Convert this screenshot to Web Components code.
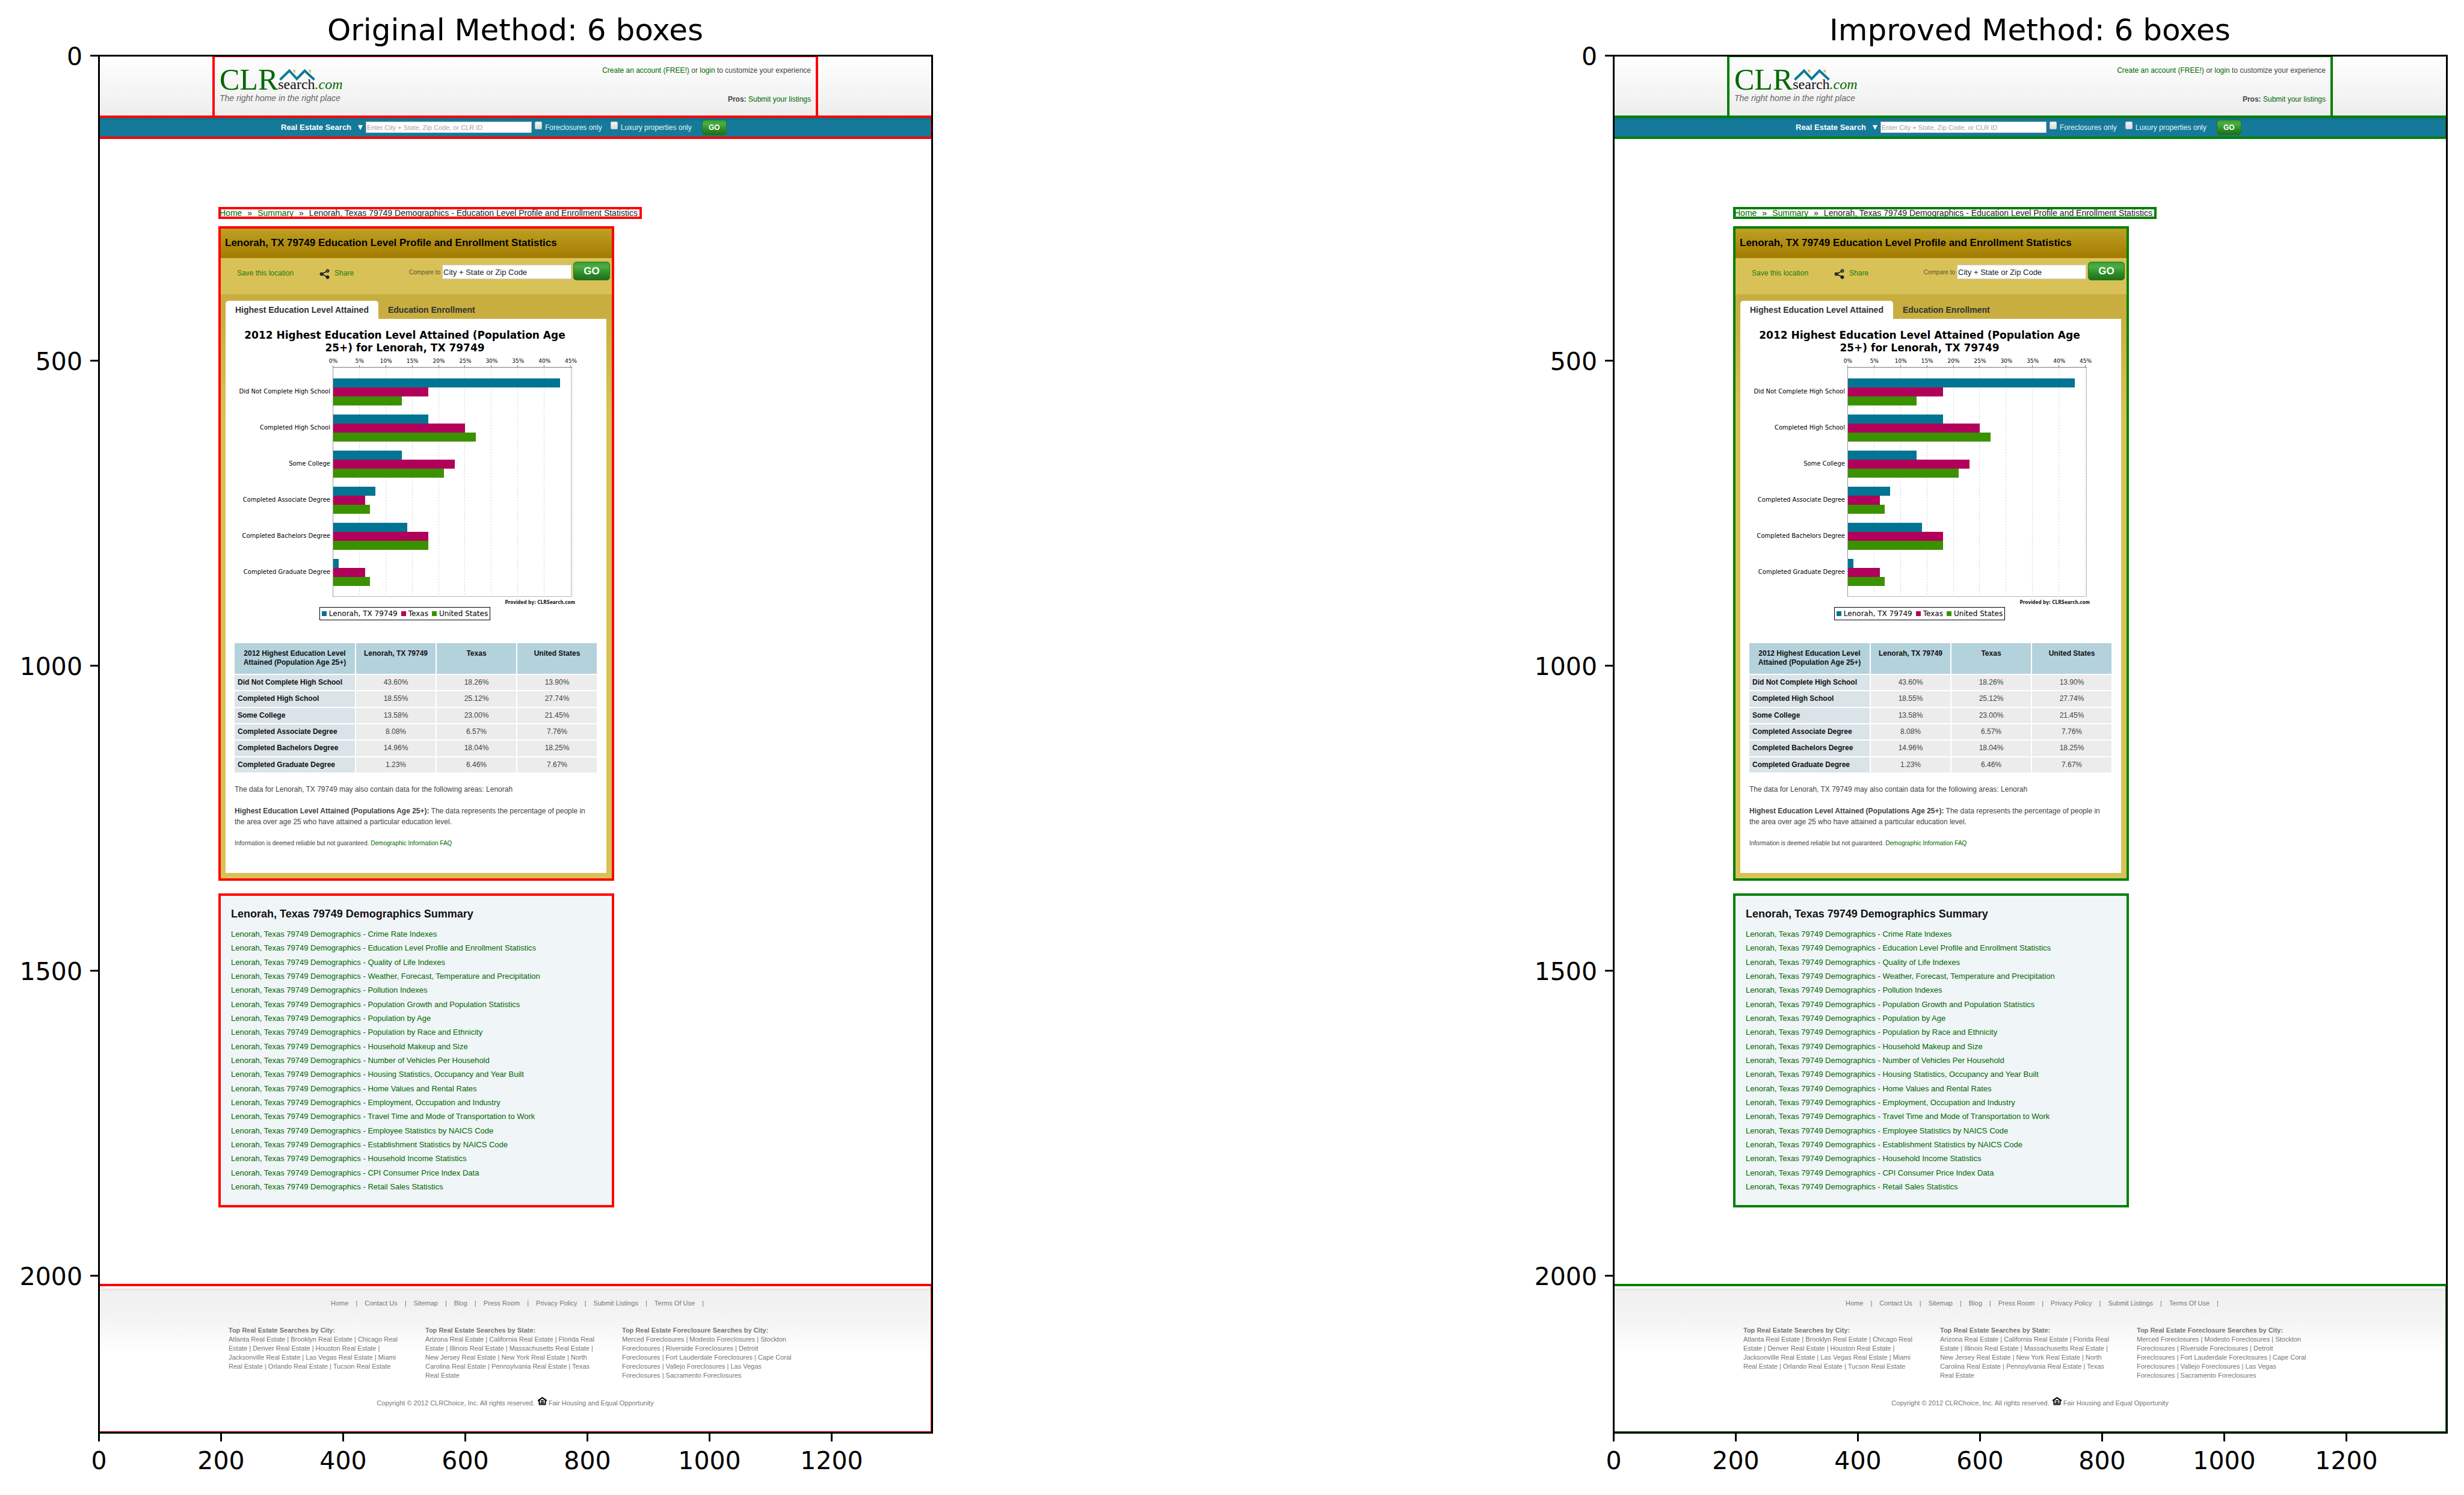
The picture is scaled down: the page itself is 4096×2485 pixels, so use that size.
<!DOCTYPE html>
<html lang="en">
<head>
<meta charset="utf-8">
<title>Box detection comparison</title>
<style>
body{margin:0;background:#fff;font-family:"Liberation Sans",Arial,sans-serif}
main{display:flex;gap:969px;padding-right:29px}
plot-figure{flex:1}
</style>
</head>
<body>
<main>
  <plot-figure heading="Original Method: 6 boxes" mark="#ff0000"><clr-page></clr-page></plot-figure>
  <plot-figure heading="Improved Method: 6 boxes" mark="#008000"><clr-page></clr-page></plot-figure>
</main>
<script>
const reset = `*{box-sizing:border-box}a{color:#006800;text-decoration:none}ul,ol,h1,h2,h3,p{margin:0;padding:0;list-style:none}
button,input{font-family:inherit;margin:0}
.go{color:#fff;font-weight:bold;padding:0;border:1px solid #23741f;border-radius:5px;background:linear-gradient(#3f9c38,#4aae42 25%,#2c8a26 65%,#216f1a)}`;

function define(name, render){
  customElements.define(name, class extends HTMLElement{
    connectedCallback(){
      if(this.shadowRoot) return;
      const root = this.attachShadow({mode:'open'});
      const t = document.createElement('template');
      t.innerHTML = render(this);
      root.append(t.content.cloneNode(true));
    }
  });
}

/* Axes with ticks around a slotted picture */
define('plot-figure', el => `<style>${reset}
:host{display:grid;grid-template-columns:164px 1fr;grid-template-rows:93px auto 100px;--mark:${el.getAttribute('mark')};min-width:0}
h1{grid-column:2;padding-top:20px;text-align:center;font:50px/60px "DejaVu Sans",sans-serif;white-space:nowrap}
ol{font:41px/48px "DejaVu Sans",sans-serif}
.y{grid-column:1;margin-top:-25px}
.y li{height:507px}
.y li:last-child{height:49px}
.y div{display:flex;justify-content:flex-end;align-items:center;gap:13px;height:49px}
.y div span{padding-top:3px}
.y i{width:15px;height:3px;margin-right:-1px;background:#000}
.stage{position:relative;min-width:0}
.clip{overflow:hidden}
.stage::after{content:"";position:absolute;inset:-2px -2px -2px -1px;border:3px solid #000;pointer-events:none}
.x{grid-column:2;display:flex;margin-left:-101px}
.x li{width:203px;display:flex;flex-direction:column;align-items:center;gap:8px}
.x i{width:3px;height:15px;background:#000}
</style>
<h1>${el.getAttribute('heading')}</h1>
<ol class="y">${[0,500,1000,1500,2000].map(v=>`<li><div><span>${v}</span><i></i></div></li>`).join('')}</ol>
<div class="stage"><div class="clip"><slot></slot></div></div>
<ol class="x">${[0,200,400,600,800,1000,1200].map(v=>`<li><i></i><span>${v}</span></li>`).join('')}</ol>`);

define('clr-page', () => `<style>${reset}
:host{display:block;background:#fff;color:#444}
.boxed{outline:4px solid var(--mark);outline-offset:-2px}
.body{width:983px;margin:0 auto;padding:117px 0 131px}
bread-crumb{margin-bottom:16px}
education-panel{margin-bottom:25px}
</style>
<site-header></site-header>
<search-bar class="boxed"></search-bar>
<div class="body">
<bread-crumb class="boxed"></bread-crumb>
<education-panel class="boxed"></education-panel>
<demographics-summary class="boxed"></demographics-summary>
</div>
<site-footer class="boxed"></site-footer>`);

define('site-header', () => `<style>${reset}
:host{display:block;background:linear-gradient(#fff,#ededed)}
.in{width:1003px;height:101px;margin:0 auto;padding:16px 10px 0;display:flex;justify-content:space-between;outline:4px solid var(--mark);outline-offset:-2px}
.logo{display:flex;height:46px;font-family:"Liberation Serif",serif;color:#006800}
.clr{font-size:50px;line-height:46px}
.sub{padding-top:6px}
.sub svg{display:block;margin-left:2px}
.sub div{font-size:24px;line-height:24px;margin-top:-6px}
.sub b{font-weight:normal;color:#111}
.tag{font:italic 14px/16px "Liberation Sans",sans-serif;color:#666}
.acct{display:flex;flex-direction:column;gap:32px;text-align:right;font-size:12px;line-height:16px}
</style>
<div class="in">
<div><div class="logo"><span class="clr">CLR</span><div class="sub">
<svg width="60" height="19" viewBox="0 0 60 19"><path d="M23 1h4v6l-4-4zM49 1h4v6l-4-4z" fill="#dcc050"/><path d="M1.500 17.500L17 2.500L29.500 16L42.500 2.500L58.500 17.500" fill="none" stroke="#0b7a99" stroke-width="4"/></svg>
<div><b>search</b><i>.com</i></div></div></div>
<p class="tag">The right home in the right place</p></div>
<div class="acct"><p><a href="#">Create an account (FREE!)</a> or <a href="#">login</a> to customize your experience</p>
<p><b>Pros:</b> <a href="#">Submit your listings</a></p></div>
</div>`);

define('search-bar', () => `<style>${reset}
:host{display:block;background:linear-gradient(#106a88,#157a99 8px)}
form{width:983px;height:35px;margin:0 auto;padding-left:102px;display:flex;align-items:center;color:#e6f2f6;font-size:12px;line-height:16px}
.menu{display:flex;align-items:center;justify-content:space-between;width:136px;margin-right:5px;color:#fff;font-size:13px;font-weight:bold}
input[type=text]{width:276px;height:19px;padding:0 1px;border:1px solid #bbb;background:#fff;font-size:11px}
input::placeholder{color:#a3a3a3;opacity:1}
label{display:flex;align-items:center;gap:5px;margin-left:5px}
label+label{margin-left:14px}
input[type=checkbox]{appearance:none;width:12px;height:13px;margin-bottom:6px;border:1px solid #c4c4c4;border-radius:2px;background:linear-gradient(#f4f4f4,#d9d9d9)}
.go{width:41px;height:26px;margin-left:17px;font-size:12px}
</style>
<form onsubmit="return false"><a class="menu" href="#">Real Estate Search<svg width="8" height="8" viewBox="0 0 8 8"><path d="M0 0H8L4 8z" fill="#fff"/></svg></a>
<input type="text" aria-label="Location" placeholder="Enter City + State, Zip Code, or CLR ID">
<label><input type="checkbox">Foreclosures only</label>
<label><input type="checkbox">Luxury properties only</label>
<button class="go">GO</button></form>`);

define('bread-crumb', () => `<style>${reset}
:host{display:flex;gap:9px;width:700px;height:16px;font-size:14px;line-height:16px;white-space:nowrap;color:#222}
</style><a href="#">Home</a><span>»</span><a href="#">Summary</a><span>»</span><span>Lenorah, Texas 79749 Demographics - Education Level Profile and Enrollment Statistics</span>`);

define('education-panel', () => `<style>${reset}
:host{display:block;width:654px;background:#d8c258}
h2{height:51px;padding-left:9px;font-size:17px;line-height:51px;color:#000;background:linear-gradient(#c0a224,#a27b00)}
.tools{height:60px;display:flex;align-items:flex-start;justify-content:space-between;padding:0 5px 0 29px;font-size:12px;line-height:16px}
.links{display:flex;gap:43px;padding-top:17px}
.links a{color:#1f7a0c}
.share{display:flex;gap:8px}
.share svg{margin-top:1px}
form{display:flex;align-items:center;gap:3px;padding-top:6px}
label{font-size:10px;padding-top:5px;color:#5c5433}
input{width:215px;height:24px;margin-top:3px;padding:0 1px;border:1px solid #ccc;font-size:13px;color:#222;background:#fff}
.go{width:61px;height:31px;font-size:17px}
.area{padding:11px 11px 11px 10px;background:linear-gradient(#c8ae40,#c8ae40 30px,#d8c258 200px)}
nav{display:flex;font-size:14px;line-height:30px;font-weight:bold}
nav a{color:#333;padding:0 16px;border-radius:5px 5px 0 0}
nav a.on{background:#fff}
.sheet{background:#fff;padding:17px 15px 40px}
level-table{margin:36px -2px 0}
.notes{width:596px;font-size:12px;line-height:18px;display:grid;gap:18px;padding-top:17px}
.small{font-size:10px}
</style>
<h2>Lenorah, TX 79749 Education Level Profile and Enrollment Statistics</h2>
<div class="tools"><div class="links"><a href="#">Save this location</a>
<a href="#" class="share"><svg width="17" height="17" viewBox="0 0 17 17"><path d="M13.500 3.500L3.500 8.500L13.500 13.500" fill="none" stroke="#222" stroke-width="1.800"/><g stroke="#111"><circle cx="13.500" cy="3.300" r="2.500" fill="#555"/><circle cx="3.500" cy="8.500" r="2.500" fill="#333"/><circle cx="13.500" cy="13.700" r="2.500" fill="#222"/></g></svg>Share</a></div>
<form onsubmit="return false"><label for="cmp">Compare to</label><input id="cmp" type="text" value="City + State or Zip Code"><button class="go">GO</button></form></div>
<div class="area"><nav><a href="#" class="on">Highest Education Level Attained</a><a href="#">Education Enrollment</a></nav>
<div class="sheet"><level-chart></level-chart><level-table></level-table>
<div class="notes"><p>The data for Lenorah, TX 79749 may also contain data for the following areas: Lenorah</p>
<p><b>Highest Education Level Attained (Populations Age 25+):</b> The data represents the percentage of people in the area over age 25 who have attained a particular education level.</p>
<p class="small">Information is deemed reliable but not guaranteed. <a href="#">Demographic Information FAQ</a></p></div>
</div></div>`);

const levels = [
 ['Did Not Complete High School','43.60%','18.26%','13.90%'],
 ['Completed High School','18.55%','25.12%','27.74%'],
 ['Some College','13.58%','23.00%','21.45%'],
 ['Completed Associate Degree','8.08%','6.57%','7.76%'],
 ['Completed Bachelors Degree','14.96%','18.04%','18.25%'],
 ['Completed Graduate Degree','1.23%','6.46%','7.67%']];
const areas = ['Lenorah, TX 79749','Texas','United States'];
const hues = ['#007493','#b1005a','#3b9200'];

define('level-chart', () => {
  const step = 395/9;
  let g = '';
  for(let i=1;i<10;i++){const x=Math.round(i*step)+.5; g+=`<path d="M${x} 1V382" stroke="#ddd" stroke-dasharray="3 2"/><path d="M${x} -3V0" stroke="#777"/>`;}
  levels.forEach((r,i)=>r.slice(1).forEach((v,j)=>{
    g+=`<rect x="1" y="${19+i*60+j*15}" width="${Math.round(Math.floor(parseFloat(v))*395/45)}" height="15" fill="${hues[j]}"/>`;}));
  return `<style>${reset}
:host{display:block;width:566px;font-family:"DejaVu Sans",sans-serif;color:#000}
h3{font-size:17px;line-height:21px;text-align:center}
.scale{display:flex;width:439px;margin:4px 0 3px 142px;font-size:9px;line-height:14px;text-align:center}
.scale li{flex:1}
.plot{display:flex;gap:4px}
.names{width:159px;padding:11px 0;text-align:right;font-size:10px;line-height:60px;white-space:nowrap}
svg{display:block;overflow:visible}
.by{margin-top:4px;text-align:right;font:bold 8px/12px "DejaVu Sans Condensed","DejaVu Sans",sans-serif;color:#222}
.key{display:flex;gap:6px;width:fit-content;height:22px;margin:1px auto 0;padding:0 3px;border:1px solid #000;font-size:12px;line-height:20px}
.key li{display:flex;align-items:center;gap:4px}
.key i{width:8px;height:8px}
</style>
<h3>2012 Highest Education Level Attained (Population Age 25+) for Lenorah, TX 79749</h3>
<ul class="scale">${[0,5,10,15,20,25,30,35,40,45].map(v=>`<li>${v}%</li>`).join('')}</ul>
<div class="plot"><ul class="names">${levels.map(r=>`<li>${r[0]}</li>`).join('')}</ul>
<svg width="398" height="382" viewBox="0 0 398 382"><path d="M397.500 .5V381.500H.5" fill="none" stroke="#b5b5b5"/>${g}<path d="M.5 382V-3" stroke="#999"/><path d="M0 .5H398" stroke="#777"/></svg></div>
<p class="by">Provided by: CLRSearch.com</p>
<ul class="key">${areas.map((a,i)=>`<li><i style="background:${hues[i]}"></i>${a}</li>`).join('')}</ul>`;
});

define('level-table', () => `<style>${reset}
:host{display:block}
table{width:606px;height:219px;border-spacing:2px;table-layout:fixed;font-size:12px;line-height:15px}
th,td{padding:0;text-align:center}
thead th{height:51px;background:#b4d2dc;color:#111;vertical-align:top;padding-top:10px}
th:first-child{width:200px}
tbody th{background:#dae3e8;color:#111;text-align:left;padding-left:5px}
td{background:#ececec}
</style>
<table><thead><tr><th scope="col">2012 Highest Education Level Attained (Population Age 25+)</th>${areas.map(a=>`<th scope="col">${a}</th>`).join('')}</tr></thead>
<tbody>${levels.map(r=>`<tr><th scope="row">${r[0]}</th>${r.slice(1).map(v=>`<td>${v}</td>`).join('')}</tr>`).join('')}</tbody></table>`);

define('demographics-summary', () => `<style>${reset}
:host{display:block;width:654px;padding:21px 19px 24px;background:#f0f5f8}
h2{font-size:18px;line-height:22px;color:#111;margin-bottom:15px}
ul{display:flex;flex-direction:column;justify-content:space-between;height:436px;font-size:13px;line-height:16px}
</style><h2>Lenorah, Texas 79749 Demographics Summary</h2><ul>${[
'Crime Rate Indexes','Education Level Profile and Enrollment Statistics','Quality of Life Indexes','Weather, Forecast, Temperature and Precipitation','Pollution Indexes','Population Growth and Population Statistics','Population by Age','Population by Race and Ethnicity','Household Makeup and Size','Number of Vehicles Per Household','Housing Statistics, Occupancy and Year Built','Home Values and Rental Rates','Employment, Occupation and Industry','Travel Time and Mode of Transportation to Work','Employee Statistics by NAICS Code','Establishment Statistics by NAICS Code','Household Income Statistics','CPI Consumer Price Index Data','Retail Sales Statistics'
].map(s=>`<li><a href="#">Lenorah, Texas 79749 Demographics - ${s}</a></li>`).join('')}</ul>`);

const list = s => s.split(',').map(x=>`<a href="#">${x.split(' ').map(w=>`<span>${w}</span>`).join(' ')}</a>`).join(' | ');
define('site-footer', () => `<style>${reset}
:host{display:block;padding-bottom:41px;color:#777;font-size:11px;background:linear-gradient(#fff 2px,#e2e2e2 9px,#f0f0f0 9px,#f3f3f3 50px,#fff 115px)}
a{color:inherit}
nav{display:flex;justify-content:center;gap:12px;padding:23px 0 30px 7px;line-height:14px}
.cols{display:grid;grid-template-columns:repeat(3,327px);width:983px;margin:0 auto;padding-left:15px;line-height:15px}
.cols div{padding-right:35px}
h3{font-size:11px;line-height:16px}
.copy{display:flex;justify-content:center;margin-top:30px;line-height:16px}
.copy svg{margin:-2px 3px 0 5px}
</style>
<nav>${['Home','Contact Us','Sitemap','Blog','Press Room','Privacy Policy','Submit Listings','Terms Of Use'].map(x=>`<a href="#">${x}</a><span>|</span>`).join('')}</nav>
<div class="cols">
<div><h3>Top Real Estate Searches by City:</h3><p>${list('Atlanta Real Estate,Brooklyn Real Estate,Chicago Real Estate,Denver Real Estate,Houston Real Estate,Jacksonville Real Estate,Las Vegas Real Estate,Miami Real Estate,Orlando Real Estate,Tucson Real Estate')}</p></div>
<div><h3>Top Real Estate Searches by State:</h3><p>${list('Arizona Real Estate,California Real Estate,Florida Real Estate,Illinois Real Estate,Massachusetts Real Estate,New Jersey Real Estate,New York Real Estate,North Carolina Real Estate,Pennsylvania Real Estate,Texas Real Estate')}</p></div>
<div><h3>Top Real Estate Foreclosure Searches by City:</h3><p>${list('Merced Foreclosures,Modesto Foreclosures,Stockton Foreclosures,Riverside Foreclosures,Detroit Foreclosures,Fort Lauderdale Foreclosures,Cape Coral Foreclosures,Vallejo Foreclosures,Las Vegas Foreclosures,Sacramento Foreclosures')}</p></div>
</div>
<div class="copy">Copyright © 2012 CLRChoice, Inc. All rights reserved.<svg width="15" height="15" viewBox="0 0 15 15"><path d="M7.500 0L15 5V7H13.500V13H1.500V7H0V5z" fill="#000"/><path d="M7.500 2.500L11.500 5.500V11H3.500V5.500z" fill="#fff"/><path d="M5 5.500H10V7.500H5zM5 8.500H10V10.500H5z" fill="#000"/><path d="M1.500 14.500H13.500" stroke="#777" stroke-dasharray="2 1"/></svg>Fair Housing and Equal Opportunity</div>`);
</script>
</body>
</html>
